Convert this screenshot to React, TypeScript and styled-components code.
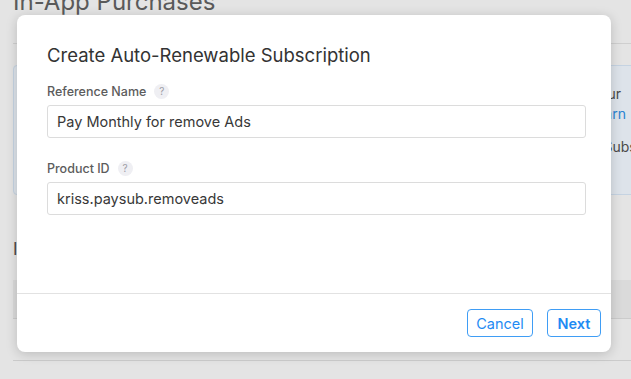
import React from 'react';
import styled, { createGlobalStyle } from 'styled-components';

const GlobalStyle = createGlobalStyle`
  html, body {
    margin: 0;
    padding: 0;
    background: #e4e4e4;
    font-family: Inter, "Noto Sans", "Liberation Sans", sans-serif;
    -webkit-font-smoothing: antialiased;
  }
`;

const Page = styled.div`
  position: relative;
  width: 631px;
  height: 379px;
  overflow: hidden;
  background: #e4e4e4;
`;

const PageContent = styled.div`
  padding-left: 13px;
  display: flex;
  flex-direction: column;
`;

const PageTitle = styled.h1`
  margin: -16px 0 0;
  padding-bottom: 23px;
  font-size: 24px;
  line-height: 36px;
  font-weight: 400;
  color: #5a5a5a;
  border-bottom: 1px solid #cfcfcf;
`;

const InfoBox = styled.div`
  margin-top: 21px;
  margin-right: -20px;
  height: 130px;
  background: #dde3ea;
  border: 1px solid #c5d3e2;
  border-radius: 4px;
  display: flex;
  flex-direction: column;
  padding-top: 18px;
  box-sizing: border-box;
`;

const InfoLine = styled.div<{ $right: number; $link?: boolean; $gap?: number }>`
  text-align: right;
  font-size: 14px;
  line-height: 20px;
  color: ${p => (p.$link ? '#2a84d2' : '#4a4a4a')};
  padding-right: ${p => p.$right}px;
  margin-top: ${p => p.$gap || 0}px;
`;

const SectionTitle = styled.h2`
  margin: 42px 0 0;
  font-size: 17px;
  line-height: 24px;
  font-weight: 400;
  color: #4a4a4a;
`;

const TableHeader = styled.div`
  margin-top: 19px;
  height: 38px;
  background: #dadada;
  border-bottom: 1px solid #cbcbcb;
`;

const TableRow = styled.div`
  height: 41px;
  border-bottom: 1px solid #cbcbcb;
`;

const Modal = styled.div`
  position: absolute;
  left: 17px;
  top: 15px;
  width: 594px;
  height: 337px;
  background: #fff;
  border-radius: 8px;
  box-shadow: 0 2px 12px rgba(0, 0, 0, 0.18);
  display: flex;
  flex-direction: column;
`;

const ModalBody = styled.div`
  flex: 1;
  padding: 28px 25px 0 30px;
  display: flex;
  flex-direction: column;
`;

const ModalTitle = styled.h2`
  margin: 0 0 16px;
  font-size: 18.5px;
  line-height: 24px;
  font-weight: 400;
  color: #333;
`;

const Field = styled.div`
  display: flex;
  flex-direction: column;
  gap: 6px;
  & + & {
    margin-top: 22px;
  }
`;

const LabelRow = styled.div`
  display: flex;
  align-items: center;
  gap: 8px;
  height: 16px;
`;

const Label = styled.label`
  font-size: 12.5px;
  font-weight: 500;
  color: #5c5c5c;
`;

const Help = styled.span`
  width: 15px;
  height: 15px;
  border-radius: 50%;
  background: #efeff3;
  color: #9d9da6;
  font-size: 10px;
  display: flex;
  align-items: center;
  justify-content: center;
`;

const Input = styled.input`
  height: 33px;
  box-sizing: border-box;
  border: 1px solid #dcdcdc;
  border-radius: 3px;
  padding: 0 9px;
  font-family: inherit;
  font-size: 14.5px;
  color: #383838;
  outline: none;
`;

const ModalFooter = styled.div`
  height: 59px;
  border-top: 1px solid #e2e2e2;
  display: flex;
  justify-content: flex-end;
  align-items: flex-start;
  gap: 14px;
  padding: 15px 10px 0 0;
  box-sizing: border-box;
`;

const Button = styled.button<{ $primary?: boolean }>`
  height: 28px;
  width: ${p => (p.$primary ? 54 : 66)}px;
  padding: 0;
  background: #fff;
  border: 1px solid #3f9df5;
  border-radius: 4px;
  color: #1f8bf3;
  font-family: inherit;
  font-size: 14.5px;
  font-weight: ${p => (p.$primary ? 600 : 400)};
  cursor: pointer;
`;

export default function App() {
  return (
    <Page>
      <GlobalStyle />
      <PageContent>
        <PageTitle>In-App Purchases</PageTitle>
        <InfoBox>
          <InfoLine $right={29}>Create your</InfoLine>
          <InfoLine $right={24} $link>Learn</InfoLine>
          <InfoLine $right={0} $gap={13}>Auto-Renewable Subscr</InfoLine>
        </InfoBox>
        <SectionTitle>In-App Purchases (0)</SectionTitle>
        <TableHeader />
        <TableRow />
      </PageContent>
      <Modal>
        <ModalBody>
          <ModalTitle>Create Auto-Renewable Subscription</ModalTitle>
          <Field>
            <LabelRow>
              <Label>Reference Name</Label>
              <Help>?</Help>
            </LabelRow>
            <Input defaultValue="Pay Monthly for remove Ads" />
          </Field>
          <Field>
            <LabelRow>
              <Label>Product ID</Label>
              <Help>?</Help>
            </LabelRow>
            <Input defaultValue="kriss.paysub.removeads" />
          </Field>
        </ModalBody>
        <ModalFooter>
          <Button>Cancel</Button>
          <Button $primary>Next</Button>
        </ModalFooter>
      </Modal>
    </Page>
  );
}
